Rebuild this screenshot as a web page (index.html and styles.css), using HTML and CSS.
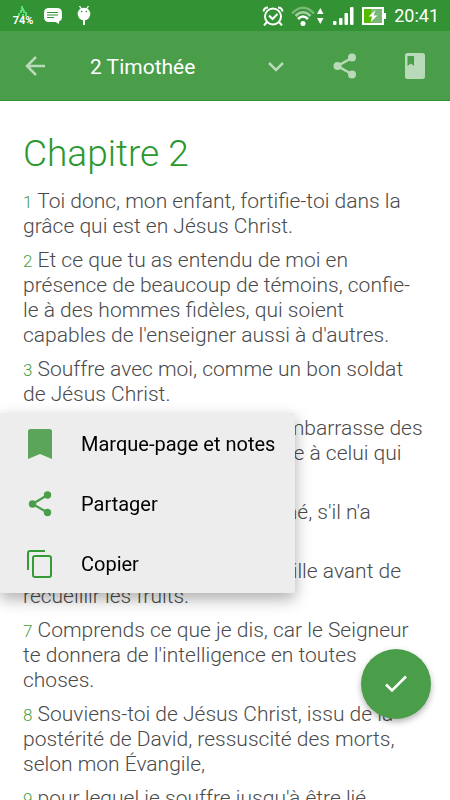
FILE: index.html
```html
<!DOCTYPE html>
<html lang="fr">
<head>
  <meta charset="UTF-8">
  <meta name="viewport" content="width=device-width, initial-scale=1.0">
  <title>2 Timothée</title>
  <link rel="stylesheet" href="styles.css">
</head>
<body>
  <div class="status">
    <div class="status-left">
      <div class="charge">
        <svg width="10" height="10" viewBox="0 0 10 10"><path d="M3 0h2v2h1v2h1v3H5V5H4v2H2V4h1z" fill="#58e07a"/><path d="M0 10V7h2v3zM4 10V8h2v2zM7 10V6h2v4z" fill="#58e07a"/></svg>
        <span>74%</span>
      </div>
      <svg class="chat" width="18" height="16" viewBox="0 0 18 16"><path d="M5 0h8q5 0 5 5v4q0 3-3 4.500v2.500l-3.500-2H5q-5 0-5-5V5q0-5 5-5z" fill="#fff"/><path d="M3 4.500h11M3 7h11M3 9.500h7" stroke="#339233" stroke-width="1"/></svg>
      <svg class="droid" width="14" height="20" viewBox="0 0 14 20"><path d="M2.500 0L4.500 3M11.500 0L9.500 3" stroke="#fff" stroke-width="1.300"/><circle cx="7" cy="8" r="6.300" fill="#fff"/><path d="M6 14h2v5H6z" fill="#fff"/><circle cx="4.700" cy="5.600" r=".8" fill="#339233"/><circle cx="9.300" cy="5.600" r=".8" fill="#339233"/></svg>
    </div>
    <div class="status-right">
      <svg width="22" height="20" viewBox="0 0 22 20" fill="none" stroke="#fff" stroke-width="2"><circle cx="11" cy="10.500" r="8"/><path d="M1.500 5.500Q2 1.500 6 1.500M20.500 5.500Q20 1.500 16 1.500M5 16l-3 3.500M17 16l3 3.500M7 9.500l3.500 3.500L15.500 8"/></svg>
      <svg class="wifi" width="34" height="20" viewBox="0 0 34 20" fill="none" stroke="#fff" stroke-width="2.500"><path d="M1 7.500Q12-4 23 7.500" opacity=".35"/><path d="M4.500 10Q12 2.500 19.500 10" opacity=".55"/><path d="M7 13Q12 8 17 13"/><circle cx="12" cy="17.500" r="2.500" fill="#fff" stroke="none"/><path d="M26 8l3.300-6L32.500 8zM26 12l3.300 6 3.200-6z" fill="#fff" stroke="none"/></svg>
      <svg class="signal" width="21" height="18" viewBox="0 0 21 18" fill="#fff"><rect y="14" width="3.500" height="4" rx="1"/><rect x="6" y="11" width="3.500" height="7" rx="1"/><rect x="11.500" y="6" width="3.500" height="12" rx="1"/><rect x="17" width="3.500" height="18" rx="1"/></svg>
      <svg class="battery" width="24" height="18" viewBox="0 0 24 18"><rect x="1" y="1" width="20" height="16" fill="#79b779" stroke="#fff" stroke-width="2"/><path d="M2 2h7v14H2z" fill="#55b900"/><path d="M21 6h3v6h-3z" fill="#fff"/><path d="M13.500 3L6.500 9.500h4L8.500 15l7-6.500h-4z" fill="#fff"/></svg>
      <time>20:41</time>
    </div>
  </div>

  <header class="bar">
    <button class="icon-btn" aria-label="Retour"><svg width="20" height="20" viewBox="0 0 20 20" fill="none" stroke="#b9dab9" stroke-width="2.500"><path d="M20 10H2M11 1l-9 9 9 9"/></svg></button>
    <button class="book"><span>2 Timothée</span><svg width="16" height="10" viewBox="0 0 16 10" fill="none" stroke="#b9dab9" stroke-width="2.500"><path d="M1 1l7 7 7-7"/></svg></button>
    <button class="icon-btn" aria-label="Partager"><svg width="24" height="26" viewBox="0 0 24 26" fill="#b9dab9"><path d="M19.500 4.500L4.500 13l15 8.500" fill="none" stroke="#b9dab9" stroke-width="2.500"/><circle cx="19" cy="4.500" r="4"/><circle cx="4.500" cy="13" r="4"/><circle cx="19" cy="21.500" r="4"/></svg></button>
    <button class="icon-btn" aria-label="Notes"><svg width="20" height="26" viewBox="0 0 20 26"><rect width="20" height="26" rx="2.500" fill="#b9dab9"/><path d="M2.500 3H9v10l-3.200-2.500L2.500 13z" fill="#4a9e4a"/></svg></button>
  </header>

  <main class="chapter">
    <h1>Chapitre 2</h1>
    <p><span class="num">1</span> Toi donc, mon enfant, fortifie-toi dans la grâce qui est en Jésus Christ.</p>
    <p><span class="num">2</span> Et ce que tu as entendu de moi en présence de beaucoup de témoins, confie-le à des hommes fidèles, qui soient capables de l'enseigner aussi à d'autres.</p>
    <p><span class="num">3</span> Souffre avec moi, comme un bon soldat de Jésus Christ.</p>
    <p><span class="num">4</span> Il n'est pas de soldat qui s'embarrasse des affaires de la vie, s'il veut plaire à celui qui l'a enrôlé;</p>
    <p><span class="num">5</span> et l'athlète n'est pas couronné, s'il n'a combattu suivant les règles.</p>
    <p><span class="num">6</span> Il faut que le laboureur travaille avant de recueillir les fruits.</p>
    <p><span class="num">7</span> Comprends ce que je dis, car le Seigneur te donnera de l'intelligence en toutes choses.</p>
    <p><span class="num">8</span> Souviens-toi de Jésus Christ, issu de la postérité de David, ressuscité des morts, selon mon Évangile,</p>
    <p><span class="num">9</span> pour lequel je souffre jusqu'à être lié comme un malfaiteur.</p>
  </main>

  <div class="menu">
    <button><svg width="26" height="32" viewBox="0 0 26 32"><path d="M1 3.500Q1 1 3.500 1h19Q25 1 25 3.500V31l-12-5-12 5z" fill="#5aa55a"/></svg>Marque-page et notes</button>
    <button><svg width="26" height="28" viewBox="0 0 26 28" fill="#4a9e4a"><path d="M20.500 5L5.500 14l15 8.500" fill="none" stroke="#4a9e4a" stroke-width="2.200"/><circle cx="20.500" cy="5" r="3.700"/><circle cx="5.500" cy="14" r="3.700"/><circle cx="20.500" cy="22.500" r="3.700"/></svg>Partager</button>
    <button><svg width="26" height="28" viewBox="0 0 26 28" fill="none" stroke="#359b35" stroke-width="2"><path d="M18 1H3Q1 1 1 3v17"/><rect x="6" y="6" width="18" height="21" rx="2"/></svg>Copier</button>
  </div>

  <button class="fab" aria-label="Valider"><svg width="22" height="18" viewBox="0 0 22 18" fill="none" stroke="#fff" stroke-width="2.500"><path d="M1 9.500l6 6L21 1.500"/></svg></button>
</body>
</html>
```

FILE: styles.css
```css
*{margin:0;padding:0;box-sizing:border-box;}

body {
  display: flex;
  flex-direction: column;
  height: 100vh;
  overflow: hidden;
  background: #fff;
  font-family: Roboto, "Noto Sans", sans-serif;
}
button {
  border: 0;
  background: none;
  font: inherit;
  cursor: pointer;
}
svg {
  display: block;
  flex-shrink: 0;
}

/* status bar */
.status {
  display: flex;
  justify-content: space-between;
  flex-shrink: 0;
  height: 31px;
  padding: 0 11px 0 13px;
  background: #339233;
  color: #fff;
}
.status-left,
.status-right {
  display: flex;
  align-items: center;
}
.charge {
  display: flex;
  flex-direction: column;
  align-items: center;
  width: 20px;
  font-size: 11px;
  font-weight: 700;
  line-height: 10px;
}
.chat {
  margin-left: 11px;
}
.droid {
  margin-left: 15px;
}
.wifi {
  margin-left: 7px;
}
.signal {
  margin-left: 8px;
}
.battery {
  margin-left: 8px;
}
.status time {
  margin-left: 8px;
  font-size: 18px;
}

/* app bar */
.bar {
  display: flex;
  align-items: center;
  flex-shrink: 0;
  height: 70px;
  background: #4a9e4a;
  border-bottom: 1px solid #339233;
}
.icon-btn {
  display: flex;
  align-items: center;
  justify-content: center;
  width: 70px;
  height: 70px;
}
.book {
  display: flex;
  align-items: center;
  justify-content: space-between;
  flex: 1;
  height: 70px;
  padding: 2px 26px 0 20px;
  color: #fff;
  font-size: 21px;
}

/* text */
.chapter {
  flex: 1;
  padding: 29px 26px 0 23px;
  overflow-y: auto;
  scrollbar-width: none;
  color: #4a4a4a;
  font-size: 21px;
  font-weight: 300;
  line-height: 25px;
}
.chapter h1 {
  margin-bottom: 11px;
  color: #2a982f;
  font-size: 37px;
  font-weight: 300;
  line-height: 48px;
}
.chapter p {
  margin-bottom: 9px;
}
.num {
  color: #45a045;
  font-size: 17px;
  line-height: 1;
}

/* popup menu */
.menu {
  position: fixed;
  top: 413px;
  left: 0;
  width: 295px;
  border-radius: 2px;
  background: #ededed;
  box-shadow: 0 6px 16px rgba(0,0,0,.32);
}
.menu button {
  display: flex;
  align-items: center;
  gap: 28px;
  width: 100%;
  height: 60px;
  padding: 1px 0 0 27px;
  color: #000;
  font-size: 20px;
  white-space: nowrap;
}

.fab {
  display: flex;
  align-items: center;
  justify-content: center;
  position: fixed;
  right: 19px;
  bottom: 81px;
  width: 70px;
  height: 70px;
  border-radius: 50%;
  background: #4a9e4a;
  box-shadow: 0 3px 6px rgba(0,0,0,.3);
}
```
